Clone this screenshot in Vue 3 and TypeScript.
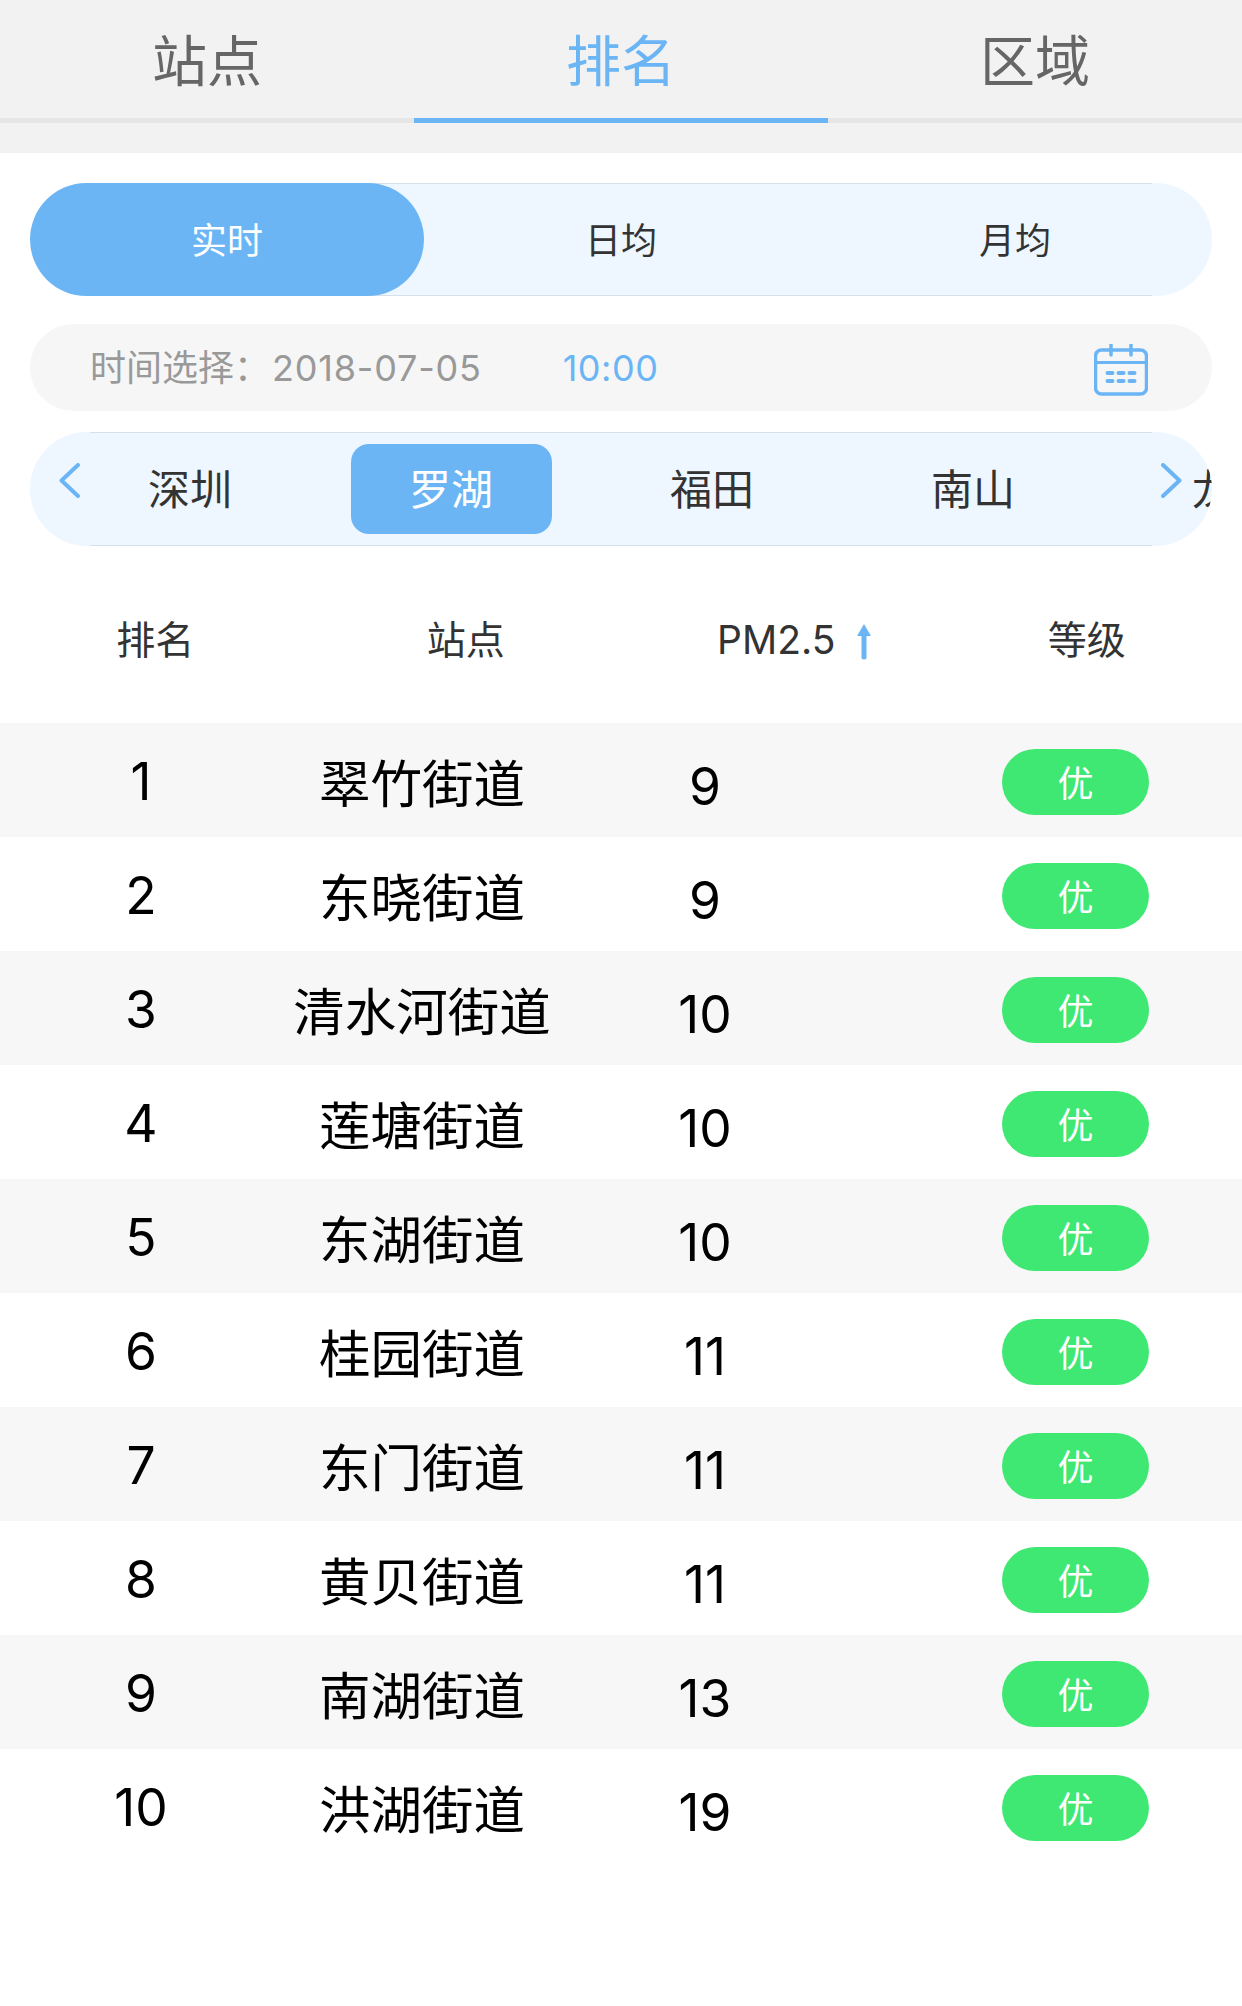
<template>
  <div class="page">
    <div class="top-tabs">
      <div v-for="(t, i) in topTabs" :key="t" class="top-tab" :class="{ active: i === 1 }">{{ t }}</div>
    </div>

    <div class="segment">
      <div v-for="(s, i) in periods" :key="s" class="segment-item" :class="{ active: i === 0 }">{{ s }}</div>
    </div>

    <div class="date-pill">
      <div class="date-text">
        <span class="date-label">时间选择：</span><span class="date-num">2018-07-05</span><span class="date-time">10:00</span>
      </div>
      <svg class="calendar" width="54" height="52" viewBox="0 0 54 52" fill="none" stroke="#6bb5f5">
        <rect x="1.5" y="6" width="51" height="44" rx="6" stroke-width="3.500" />
        <path d="M2 18.500h50" stroke-width="3" />
        <path d="M17 1v10M37 1v10" stroke-width="3.500" stroke-linecap="round" />
        <path d="M13.500 29h5M24.500 29h5M35.500 29h5M13.500 37h5M24.500 37h5M35.500 37h5" stroke-width="4" stroke-linecap="round" />
      </svg>
    </div>

    <div class="city-pill">
      <div class="city-scroll">
        <div v-for="(c, i) in cities" :key="c" class="city" :class="{ active: i === 1 }">{{ c }}</div>
      </div>
      <svg class="arrow arrow-left" width="21" height="35" viewBox="0 0 21 35" fill="none" stroke="#6bb5f5" stroke-width="4" stroke-linecap="round" stroke-linejoin="round">
        <path d="M19 2L2.500 17.500L19 33" />
      </svg>
      <svg class="arrow arrow-right" width="21" height="35" viewBox="0 0 21 35" fill="none" stroke="#6bb5f5" stroke-width="4" stroke-linecap="round" stroke-linejoin="round">
        <path d="M2 2L18.500 17.500L2 33" />
      </svg>
    </div>

    <div class="table-head">
      <div>排名</div>
      <div>站点</div>
      <div class="pm">
        <span class="pm-text">PM2.5</span>
        <svg class="sort" width="16" height="36" viewBox="0 0 16 36">
          <path d="M8 0L15 12H10.500V34.500Q8 36.500 5.500 34.500V12H1Z" fill="#6bb5f5" />
        </svg>
      </div>
      <div>等级</div>
    </div>

    <div class="rows">
      <div v-for="row in rows" :key="row.rank" class="row">
        <div class="rank">{{ row.rank }}</div>
        <div class="name">{{ row.name }}</div>
        <div class="value">{{ row.value }}</div>
        <div class="grade-cell"><span class="grade">优</span></div>
      </div>
    </div>
  </div>
</template>

<script setup lang="ts">
const topTabs = ['站点', '排名', '区域']
const periods = ['实时', '日均', '月均']
const cities = ['深圳', '罗湖', '福田', '南山', '龙岗']

const rows = [
  { rank: 1, name: '翠竹街道', value: 9 },
  { rank: 2, name: '东晓街道', value: 9 },
  { rank: 3, name: '清水河街道', value: 10 },
  { rank: 4, name: '莲塘街道', value: 10 },
  { rank: 5, name: '东湖街道', value: 10 },
  { rank: 6, name: '桂园街道', value: 11 },
  { rank: 7, name: '东门街道', value: 11 },
  { rank: 8, name: '黄贝街道', value: 11 },
  { rank: 9, name: '南湖街道', value: 13 },
  { rank: 10, name: '洪湖街道', value: 19 }
]
</script>

<style>
body {
  background: #fff;
}
</style>

<style scoped>
.page {
  width: 1242px;
  height: 2006px;
  overflow: hidden;
  background: #fff;
  font-family: Inter, "Noto Sans CJK SC", sans-serif;
  font-weight: 400;
  color: #333;
}

.top-tabs {
  display: grid;
  grid-template-columns: repeat(3, 1fr);
  height: 123px;
  background: #f2f2f2;
  border-bottom: 30px solid #f2f2f2;
  box-sizing: content-box;
  box-shadow: inset 0 -5px 0 #e6e6e6;
}

.top-tab {
  display: flex;
  align-items: center;
  justify-content: center;
  padding-bottom: 9px;
  font-size: 55px;
  color: #666;
}

.top-tab.active {
  color: #6bb5f5;
  border-bottom: 5px solid #6bb5f5;
  padding-bottom: 4px;
}

.segment {
  position: relative;
  display: grid;
  grid-template-columns: repeat(3, 1fr);
  height: 113px;
  margin: 30px 30px 0;
  border-radius: 57px;
  background: #eef7ff;
}

.segment::before,
.city-pill::before {
  content: "";
  position: absolute;
  top: 0;
  bottom: 0;
  left: 60px;
  right: 60px;
  border-top: 1px solid #d5e0ea;
  border-bottom: 1px solid #d5e0ea;
  pointer-events: none;
}

.segment-item {
  position: relative;
  display: flex;
  align-items: center;
  justify-content: center;
  padding-bottom: 4px;
  font-size: 36px;
  color: #333;
}

.segment-item.active {
  background: #6bb5f5;
  border-radius: 57px;
  color: #fff;
}

.date-pill {
  display: flex;
  align-items: center;
  height: 87px;
  margin: 28px 30px 0;
  padding: 0 64px 0 60px;
  border-radius: 44px;
  background: #f6f6f6;
  font-size: 36px;
}

.date-text {
  padding-bottom: 6px;
}

.date-label {
  color: #999;
}

.date-num {
  margin-left: 2px;
  color: #999;
  letter-spacing: 0.8px;
}

.date-time {
  margin-left: 81px;
  color: #6bb5f5;
  letter-spacing: 0.5px;
}

.calendar {
  margin-left: auto;
  transform: translateY(2px);
}

.city-pill {
  position: relative;
  height: 114px;
  margin: 21px 30px 0;
}

.city-scroll {
  display: flex;
  align-items: center;
  gap: 60px;
  height: 100%;
  padding-left: 60px;
  border-radius: 57px;
  background: #eef7ff;
  overflow: hidden;
}

.city {
  flex: none;
  display: flex;
  align-items: center;
  justify-content: center;
  width: 201px;
  height: 90px;
  padding: 0 1px 5px 0;
  box-sizing: border-box;
  border-radius: 18px;
  font-size: 42px;
  color: #333;
}

.city.active {
  background: #6bb5f5;
  color: #fff;
}

.arrow {
  position: absolute;
  top: 31px;
}

.arrow-left {
  left: 29px;
}

.arrow-right {
  left: 1131px;
}

.table-head {
  display: grid;
  grid-template-columns: repeat(4, 1fr);
  align-items: center;
  height: 177px;
  padding-top: 5px;
  box-sizing: border-box;
  font-size: 39px;
  color: #333;
  text-align: center;
}

.pm {
  position: relative;
}

.pm-text {
  position: relative;
  top: 2px;
}

.sort {
  position: absolute;
  top: 10px;
  left: 235px;
}

.row {
  display: grid;
  grid-template-columns: 282px 280px 286px 1fr;
  align-items: center;
  height: 114px;
  font-size: 51.500px;
  color: #000;
  text-align: center;
}

.row:nth-child(odd) {
  background: #f7f7f7;
}

.rank {
  padding-top: 2px;
}

.value {
  padding-top: 12px;
}

.grade-cell {
  display: flex;
  padding: 4px 0 0 154px;
}

.grade {
  display: flex;
  align-items: center;
  justify-content: center;
  width: 147px;
  height: 66px;
  padding-bottom: 2px;
  box-sizing: border-box;
  border-radius: 33px;
  background: #3fe872;
  font-size: 36px;
  color: #fff;
}
</style>
